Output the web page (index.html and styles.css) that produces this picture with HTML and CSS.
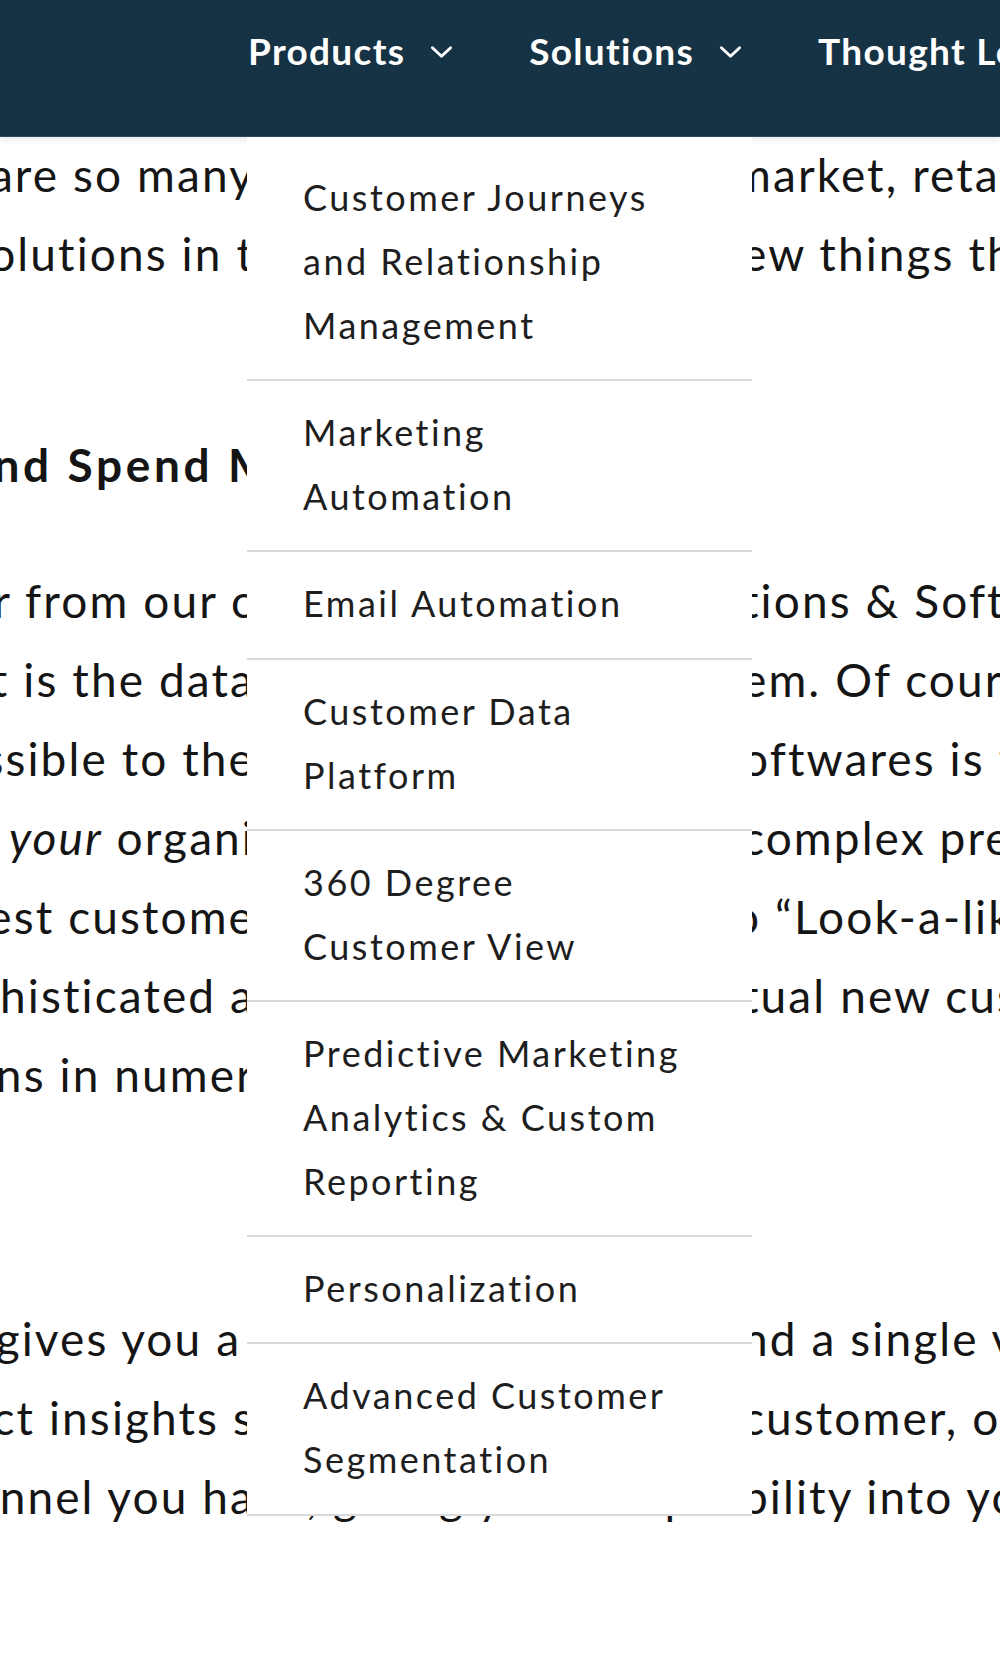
FILE: index.html
```html
<!DOCTYPE html>
<html lang="en">
<head>
<meta charset="utf-8">
<title>Products menu</title>
<link rel="stylesheet" href="styles.css">
</head>
<body>
<header class="site-header">
  <nav class="main-nav">
    <div class="nav-item">
      <span class="nav-label">Products</span>
      <svg class="chev" viewBox="0 0 24 14" width="23" height="14"><polyline points="2.5,2.5 12,11.5 21.5,2.5" fill="none" stroke="#fff" stroke-width="3" stroke-linecap="round" stroke-linejoin="round"/></svg>
    </div>
    <div class="nav-item">
      <span class="nav-label">Solutions</span>
      <svg class="chev" viewBox="0 0 24 14" width="23" height="14"><polyline points="2.5,2.5 12,11.5 21.5,2.5" fill="none" stroke="#fff" stroke-width="3" stroke-linecap="round" stroke-linejoin="round"/></svg>
    </div>
    <div class="nav-item">
      <span class="nav-label">Thought Leadership</span>
    </div>
  </nav>
  <ul class="dropdown">
    <li class="dd-item">Customer Journeys<br>and Relationship<br>Management</li>
    <li class="dd-item">Marketing<br>Automation</li>
    <li class="dd-item">Email Automation</li>
    <li class="dd-item">Customer Data<br>Platform</li>
    <li class="dd-item">360 Degree<br>Customer View</li>
    <li class="dd-item">Predictive Marketing<br>Analytics &amp; Custom<br>Reporting</li>
    <li class="dd-item">Personalization</li>
    <li class="dd-item">Advanced Customer<br>Segmentation</li>
  </ul>
</header>

<main class="article">
  <div class="para p1">
    <div class="line"><span class="l"><span>There are so many</span></span><span class="m"></span><span class="r shift">market, retail</span></div>
    <div class="line"><span class="l"><span>best solutions in t</span></span><span class="m"></span><span class="r">ew things that</span></div>
  </div>

  <h2 class="line heading"><span class="l"><span>Marketing and Spend M</span></span><span class="m"></span><span class="r"></span></h2>

  <div class="para p2">
    <div class="line"><span class="l"><span>Whether from our c</span></span><span class="m"></span><span class="r">tions &amp; Software</span></div>
    <div class="line"><span class="l"><span>that is the data</span></span><span class="m"></span><span class="r">em. Of course</span></div>
    <div class="line"><span class="l"><span>accessible to the</span></span><span class="m"></span><span class="r">oftwares is the</span></div>
    <div class="line"><span class="l"><span>to <em>your</em> organi</span></span><span class="m"></span><span class="r">complex predictive</span></div>
    <div class="line"><span class="l"><span>best custome</span></span><span class="m"></span><span class="r shift">o “Look-a-like”</span></div>
    <div class="line"><span class="l"><span>sophisticated a</span></span><span class="m"></span><span class="r">tual new customers</span></div>
    <div class="line"><span class="l"><span>patterns in numer</span></span><span class="m"></span><span class="r"></span></div>
  </div>

  <div class="para p3">
    <div class="line"><span class="l"><span>gives you a&nbsp;</span></span><span class="m"></span><span class="r">nd a single view</span></div>
    <div class="line"><span class="l"><span>direct insights s</span></span><span class="m"></span><span class="r">customer, or</span></div>
    <div class="line"><span class="l"><span>every channel you ha</span></span><span class="m">ve, giving you complete visi</span><span class="r">bility into your</span></div>
  </div>
</main>
</body>
</html>
```
FILE: styles.css
```css
* { box-sizing: border-box; }

html, body {
  margin: 0;
  padding: 0;
  background: #ffffff;
  overflow: hidden;
}

body {
  font-family: Lato, "Open Sans", "Liberation Sans", sans-serif;
  color: #1a1a1a;
  width: 1000px;
  height: 1657px;
}

/* ---------- header ---------- */
.site-header {
  position: relative;
  z-index: 10;
  height: 137px;
  background: #163346;
  border-bottom: 1px solid #2a4a5e;
  box-shadow: 0 3px 7px rgba(0, 0, 0, 0.09);
}

.main-nav {
  display: flex;
  align-items: center;
  gap: 76px;
  padding: 31px 0 0 248px;
  white-space: nowrap;
}

.nav-item {
  display: flex;
  align-items: center;
  gap: 25px;
  height: 40px;
}

.nav-label {
  font-family: Lato, "Open Sans", sans-serif;
  font-weight: 700;
  font-size: 37px;
  line-height: 40px;
  letter-spacing: 1.3px;
  color: #ffffff;
}

.chev {
  display: block;
  margin-top: 2px;
}

/* ---------- dropdown ---------- */
.dropdown {
  position: absolute;
  top: 137px;
  left: 247px;
  width: 505px;
  margin: 0;
  padding: 9px 0 0 0;
  list-style: none;
  background: #ffffff;
}

.dd-item {
  padding: 19px 20px 22.2px 56px;
  border-bottom: 2px solid #dadada;
  font-size: 36px;
  line-height: 64px;
  letter-spacing: 2.5px;
  color: #1e1e1e;
  white-space: nowrap;
}

/* ---------- article text (behind the menu) ---------- */
.article {
  font-size: 46px;
  letter-spacing: 2.1px;
  color: #151515;
}

.p1 {
  margin-top: -2px;
}

.line {
  display: grid;
  grid-template-columns: 255px 487px 258px;
  height: 79px;
  line-height: 79px;
  white-space: nowrap;
  margin: 0;
}

.line .l {
  display: flex;
  justify-content: flex-end;
  overflow: hidden;
}

.line .m,
.line .r {
  overflow: hidden;
}

.line .r.shift {
  text-indent: -9px;
}

.line em {
  font-style: italic;
}

.heading {
  margin-top: 132px;
  font-size: 46px;
  font-weight: 700;
  letter-spacing: 3.6px;
}

.heading .l > span {
  margin-right: -20px;
}

.p2 {
  margin-top: 57px;
}

.p3 {
  margin-top: 185px;
}
```
